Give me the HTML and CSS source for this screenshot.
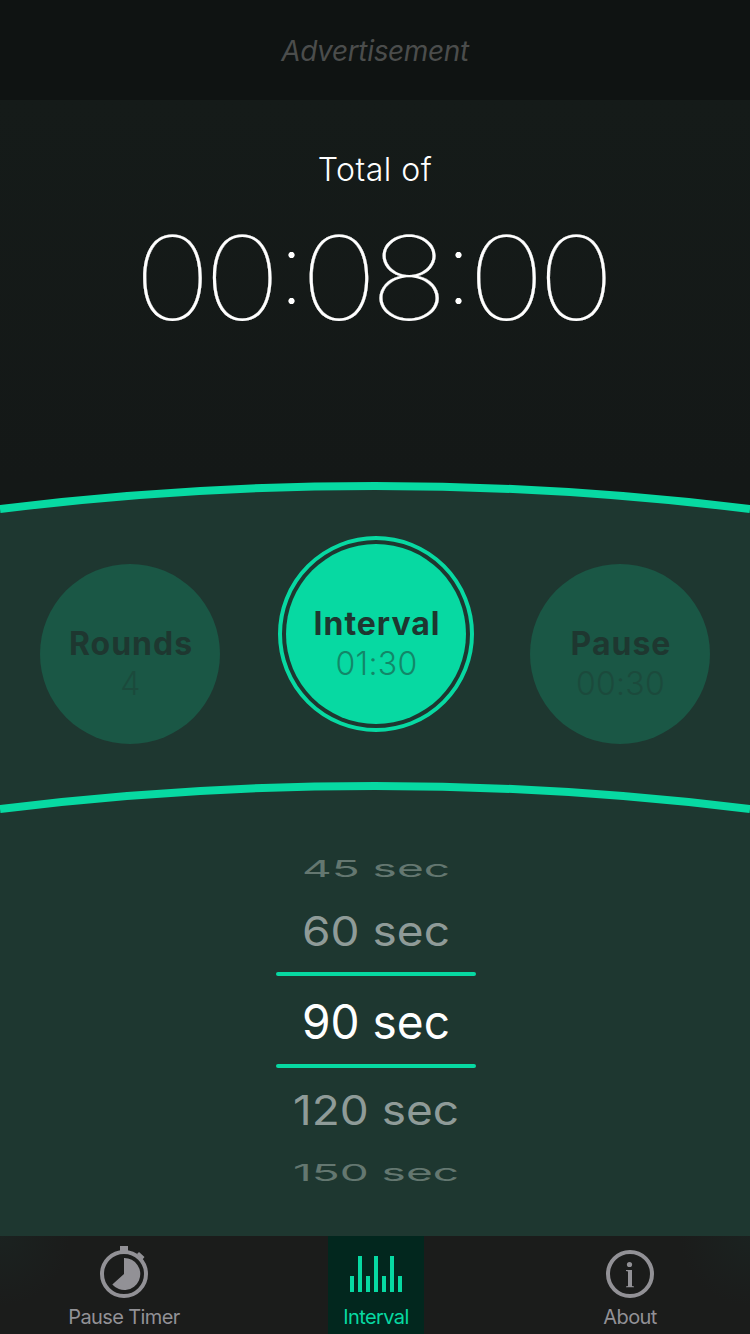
FILE: index.html
```html
<!DOCTYPE html>
<html lang="en">
<head>
<meta charset="utf-8">
<title>Interval Timer</title>
<link rel="stylesheet" href="styles.css">
</head>
<body>
<div class="app">
  <header class="ad"><span class="ad-text">Advertisement</span></header>
  <section class="total">
    <div class="total-label">Total of</div>
    <div class="clock"><span class="num">00</span><i class="colon"></i><span class="num">08</span><i class="colon"></i><span class="num">00</span></div>
  </section>
  <main class="panel">
    <svg class="arcs" width="750" height="340" viewBox="0 0 750 340">
      <path class="arc-fill" d="M0 29A3070 3070 0 0 1 750 29V340H0Z"/>
      <path class="arc" d="M0 29A3070 3070 0 0 1 750 29"/>
      <path class="arc" d="M0 329A3070 3070 0 0 1 750 329"/>
    </svg>
    <div class="dials">
      <div class="dial dim"><b class="dial-name">Rounds</b><span class="dial-value">4</span></div>
      <div class="ring"><div class="dial"><b class="dial-name">Interval</b><span class="dial-value">01:30</span></div></div>
      <div class="dial dim"><b class="dial-name">Pause</b><span class="dial-value">00:30</span></div>
    </div>
    <div class="picker">
      <div class="row far"><span class="text">45 sec</span></div>
      <div class="row near"><span class="text">60 sec</span></div>
      <div class="line"></div>
      <div class="row selected"><span class="text">90 sec</span></div>
      <div class="line"></div>
      <div class="row near low"><span class="text">120 sec</span></div>
      <div class="row far"><span class="text">150 sec</span></div>
    </div>
  </main>
  <nav class="tabs">
    <div class="tab">
      <svg class="icon" width="56" height="56" viewBox="0 0 56 56">
        <circle cx="28" cy="30" r="22" fill="none" stroke="currentColor" stroke-width="4"/>
        <path fill="currentColor" d="M24 2h8v6h-8zM41 10l2-2 5.500 5-2 2.500zM28 14a16 16 0 1 1-11.700 26.600L28 30z"/>
      </svg>
      <span class="tab-label">Pause Timer</span>
    </div>
    <div class="tab active">
      <svg class="icon" width="56" height="56" viewBox="0 0 56 56">
        <path fill="currentColor" d="M2 32h4v16H2zM10 12h4v36h-4zM18 32h4v16h-4zM26 12h4v36h-4zM34 32h4v16h-4zM42 12h4v36h-4zM50 32h4v16h-4z"/>
      </svg>
      <span class="tab-label">Interval</span>
    </div>
    <div class="tab">
      <svg class="icon" width="56" height="56" viewBox="0 0 56 56">
        <circle cx="28" cy="30" r="22" fill="none" stroke="currentColor" stroke-width="4"/>
        <circle cx="27.500" cy="20.500" r="2.600" fill="currentColor"/>
        <path fill="currentColor" d="M24 26h6v16l2 .5V43.200h-8V42.500l2-.5V27.500l-2-.5z"/>
      </svg>
      <span class="tab-label">About</span>
    </div>
  </nav>
</div>
</body>
</html>
```
FILE: styles.css
```css
* { box-sizing: border-box; }
body { margin: 0; background: #151a19; font-family: Inter, "Liberation Sans", sans-serif; }
.app { width: 750px; height: 1334px; display: flex; flex-direction: column; overflow: hidden; background: linear-gradient(#151b19 100px, #141817 480px); }
.ad { height: 100px; background: #0f1312; display: flex; align-items: center; justify-content: center; padding-top: 1px; }
.ad-text { font-size: 28px; font-style: italic; font-weight: 400; color: #4b4d4c; letter-spacing: -.35px; }
.total { height: 380px; display: flex; flex-direction: column; align-items: center; padding-top: 50px; color: #fff; }
.total-label { font-size: 32px; line-height: 40px; font-weight: 300; letter-spacing: .5px; }
.clock { display: flex; align-items: center; margin-top: 28px; height: 120px; }
.num { font-size: 116px; line-height: 120px; font-weight: 100; width: 139px; display: flex; justify-content: center; letter-spacing: -6.800px; transform: translateX(-5px) scaleX(1.130); -webkit-text-stroke: .2px #fff; }
.colon { width: 28px; height: 52px; background: radial-gradient(circle at 13.500px 3px, #fff 2.700px, transparent 3.500px), radial-gradient(circle at 13.500px 49px, #fff 2.700px, transparent 3.500px); }
.panel { height: 756px; background: linear-gradient(transparent 300px, #1e3730 300px); display: grid; grid-template-rows: 340px 1fr; }
.arcs { grid-area: 1 / 1; display: block; }
.arc-fill { fill: #1e3730; }
.arc { fill: none; stroke: #07d9a2; stroke-width: 8; }
.dials { grid-area: 1 / 1; display: flex; justify-content: space-between; align-items: flex-start; padding: 56px 40px 0; }
.dial { width: 180px; height: 180px; border-radius: 50%; background: #07d9a2; display: flex; flex-direction: column; align-items: center; padding-top: 60px; color: #1e3730; }
.dim { background: #1a5745; margin-top: 28px; }
.ring { width: 196px; height: 196px; border: 4px solid #07d9a2; border-radius: 50%; padding: 4px; margin-left: 2px; }
.dial-name { font-size: 32px; line-height: 39px; font-weight: 700; letter-spacing: 1px; padding-left: 2px; }
.dial-value { font-size: 32px; line-height: 41px; font-weight: 300; letter-spacing: .3px; padding-left: 1px; opacity: .5; }
.dim .dial-value { opacity: .4; }
.picker { grid-area: 2 / 1; display: flex; flex-direction: column; align-items: center; padding: 26px 0 0 2px; }
.row { width: 200px; display: flex; align-items: center; justify-content: center; color: #fff; font-size: 46px; white-space: nowrap; }
.row .text { display: block; line-height: 60px; }
.far { height: 44px; color: #647770; }
.near { height: 82px; color: #8f9b98; }
.far .text { transform: scaleY(.5); }
.near .text { transform: scaleY(.9); }
.low { padding-top: 2px; }
.line { width: 200px; height: 4px; border-radius: 2px; background: #07d9a2; }
.selected { height: 88px; padding-top: 2px; }
.selected .text { transform: scaleY(1.030); }
.tabs { height: 98px; display: grid; grid-template-columns: 248px 256px 252px; background: radial-gradient(circle at 0 0, #1b2220, transparent 70px), radial-gradient(circle at 100% 0, #1b2220, transparent 70px), #1b1c1b; color: #929196; }
.tab { display: flex; flex-direction: column; align-items: center; padding-top: 8px; }
.icon { display: block; }
.tab-label { font-size: 20px; line-height: 26px; margin-top: 4px; letter-spacing: -.6px; }
.active { width: 96px; justify-self: center; color: #07d9a2; background: #02271e; }
```
